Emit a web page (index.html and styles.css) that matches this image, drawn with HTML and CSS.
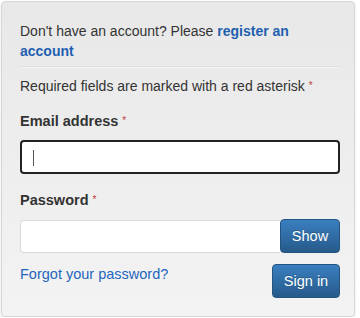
FILE: index.html
```html
<!DOCTYPE html>
<html lang="en">
<head>
<meta charset="utf-8">
<title>Sign in</title>
<link rel="stylesheet" href="styles.css">
</head>
<body>
<div class="panel">
  <p class="intro">Don't have an account? Please <a href="#" class="strong-link">register an account</a></p>
  <hr class="sep">
  <p class="req">Required fields are marked with a red asterisk <span class="ast">*</span></p>
  <label class="lbl" for="email">Email address <span class="ast">*</span></label>
  <div class="email-box"><span class="caret"></span></div>
  <label class="lbl lbl2" for="pw">Password <span class="ast">*</span></label>
  <div class="pw-group">
    <div class="pw-input"></div>
    <button class="btn btn-show" type="button">Show</button>
  </div>
  <div class="actions">
    <a href="#" class="forgot">Forgot your password?</a>
    <button class="btn btn-signin" type="button">Sign in</button>
  </div>
</div>
</body>
</html>
```
FILE: styles.css
```css
html, body {
  margin: 0;
  padding: 0;
  background: #ffffff;
}
body {
  font-family: "Liberation Sans", Arial, sans-serif;
  font-size: 14px;
  color: #333333;
}
.panel {
  box-sizing: border-box;
  width: 354px;
  height: 316px;
  margin: 1px 0 0 1px;
  padding: 19px 14px 0 18px;
  border: 1px solid #d6d6d6;
  border-radius: 4px;
  background: linear-gradient(#e8e8e8, #f3f3f3);
  box-shadow: 0 1px 2px rgba(0,0,0,0.12);
}
.intro {
  margin: 0;
  line-height: 20px;
  width: 300px;
}
.strong-link {
  color: #1f5fb0;
  font-weight: bold;
  text-decoration: none;
}
.sep {
  margin: 5px 0 0 0;
  border: 0;
  border-top: 1px solid #e0e0e0;
  border-bottom: 1px solid #f2f2f2;
  height: 0;
}
.req {
  margin: 8px 0 0 0;
  line-height: 20px;
}
.ast {
  color: #c43b3b;
  font-size: 10px;
  font-weight: normal;
  vertical-align: 2px;
}
.lbl {
  display: block;
  margin-top: 15px;
  line-height: 20px;
  font-weight: bold;
  font-size: 14.5px;
}
.lbl2 {
  margin-top: 16px;
}
.email-box {
  box-sizing: border-box;
  margin-top: 9px;
  width: 320px;
  height: 34px;
  border: 2px solid #222;
  border-radius: 4px;
  background: #fff;
  padding: 8px 0 0 11px;
}
.caret {
  display: block;
  width: 1px;
  height: 16px;
  background: #555;
}
.pw-group {
  display: flex;
  margin-top: 9px;
  width: 320px;
  height: 34px;
}
.pw-input {
  flex: 1;
  box-sizing: border-box;
  border: 1px solid #d9d9d9;
  border-right: 0;
  border-radius: 4px 0 0 4px;
  background: #fff;
  margin-top: 1px;
}
.btn {
  font-family: "Liberation Sans", Arial, sans-serif;
  font-size: 14.5px;
  color: #ffffff;
  border: 1px solid #245580;
  border-radius: 4px;
  background: linear-gradient(#3a7fc0, #265a8a);
  text-shadow: 0 -1px 0 rgba(0,0,0,0.2);
  padding: 0;
  cursor: pointer;
}
.btn-show {
  width: 60px;
  height: 34px;
}
.actions {
  display: flex;
  justify-content: space-between;
  align-items: flex-start;
  margin-top: 11px;
  width: 320px;
}
.forgot {
  color: #1f66c0;
  text-decoration: none;
  font-size: 14.5px;
  line-height: 18px;
  padding-top: 1px;
}
.btn-signin {
  width: 68px;
  height: 34px;
}
```
